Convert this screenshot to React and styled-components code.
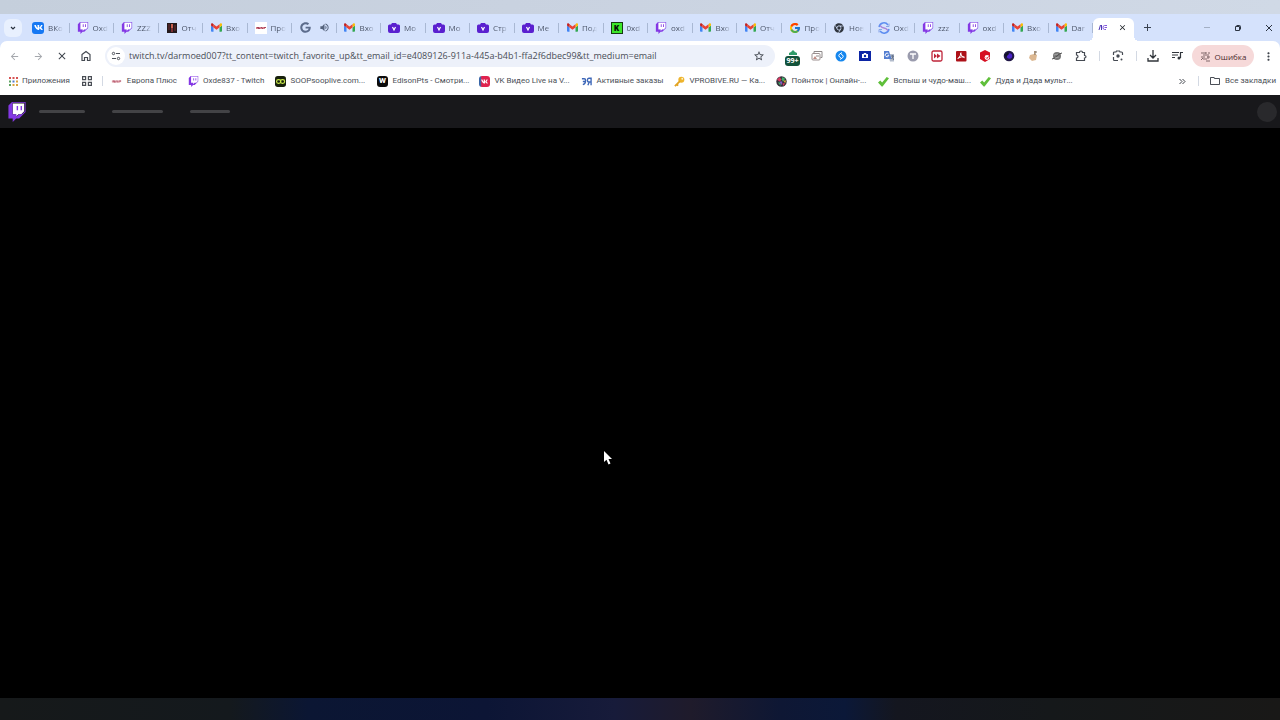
import React from "react";
import styled, { createGlobalStyle } from "styled-components";
import { FaChrome, FaGoogle, FaVk } from "react-icons/fa";
import { FcGoogle } from "react-icons/fc";
import {
  MdArrowBack,
  MdArrowForward,
  MdClose,
  MdMoreVert,
  MdOutlineFolder,
  MdStarBorder,
  MdVolumeUp,
} from "react-icons/md";

const TABS = [
  { icon: "vk", title: "ВКо" },
  { icon: "twitch", title: "Oxd" },
  { icon: "twitch", title: "ZZZ" },
  { icon: "photo", title: "Отч" },
  { icon: "gmail", title: "Вхо" },
  { icon: "europa", title: "Про" },
  { icon: "googleGray", audio: true, title: "" },
  { icon: "gmail", title: "Вхо" },
  { icon: "camera", title: "Мо" },
  { icon: "camera", title: "Мо" },
  { icon: "camera", title: "Стр" },
  { icon: "camera", title: "Ме" },
  { icon: "gmail", title: "Под" },
  { icon: "kick", title: "0xd" },
  { icon: "twitch", title: "oxd" },
  { icon: "gmail", title: "Вхо" },
  { icon: "gmail", title: "Отч" },
  { icon: "google", title: "Про" },
  { icon: "chrome", title: "Нов" },
  { icon: "ring", title: "Oxd" },
  { icon: "twitch", title: "zzz" },
  { icon: "twitch", title: "oxd" },
  { icon: "gmail", title: "Вхо" },
  { icon: "gmail", title: "Dar" },
];

const BOOKMARKS = [
  { icon: "europa", title: "Европа Плюс" },
  { icon: "twitch", title: "Oxde837 - Twitch" },
  { icon: "soop", title: "SOOPsooplive.com...", wide: true },
  { icon: "edison", title: "EdisonPts - Смотри...", wide: true },
  { icon: "vkVideo", title: "VK Видео Live на V...", wide: true },
  { icon: "orders", title: "Активные заказы" },
  { icon: "key", title: "VPROBIVE.RU — Ка...", wide: true },
  { icon: "pointauc", title: "Пойнток | Онлайн-...", wide: true },
  { icon: "check", title: "Вспыш и чудо-маш...", wide: true },
  { icon: "check", title: "Дуда и Дада мульт...", wide: true },
];

const EXTENSIONS = [
  "cards",
  "shazam",
  "capture",
  "translate",
  "letterT",
  "forward",
  "acrobat",
  "cube",
  "orb",
  "hand",
  "planet",
];

function Twitch({ size = 12 }) {
  return (
    <svg width={size} height={size} viewBox="0 0 2400 2800">
      <path
        fill="#fff"
        d="M2200 1300l-400 400h-400l-350 350v-350H600V200h1600z"
      />
      <path
        fill="#8438e4"
        d="M500 0L0 500v1800h600v500l500-500h400l900-900V0H500zm1780 1330l-400 400h-400l-350 350v-350H580V120h1700v1210z"
      />
      <path fill="#8438e4" d="M1700 550h200v600h-200zM1150 550h200v600h-200z" />
    </svg>
  );
}

function Gmail() {
  return (
    <svg width="11" height="9" viewBox="52 42 88 66">
      <path fill="#4285f4" d="M58 108h14V74L52 59v43c0 3.32 2.69 6 6 6" />
      <path fill="#34a853" d="M120 108h14c3.32 0 6-2.69 6-6V59l-20 15" />
      <path fill="#fbbc04" d="M120 48v26l20-15v-8c0-7.42-8.47-11.65-14.4-7.2" />
      <path fill="#ea4335" d="M72 74V48l24 18 24-18v26L96 92" />
      <path
        fill="#c5221f"
        d="M52 51v8l20 15V48l-5.6-4.2c-5.94-4.45-14.4-.22-14.4 7.2"
      />
    </svg>
  );
}

function Svg({ size = 12, children }) {
  return (
    <svg width={size} height={size} viewBox="0 0 12 12" fill="none">
      {children}
    </svg>
  );
}

const icons = {
  twitch: <Twitch />,
  gmail: <Gmail />,
  google: <FcGoogle size={12} />,
  googleGray: <FaGoogle size={11} color="#5c6c8c" />,
  chrome: <FaChrome size={10} color="#30363f" />,
  photo: (
    <Svg>
      <path fill="#241a1c" d="M1 1h10v10H1z" />
      <path fill="#4a2226" d="M2 2h2v6H2zM8 3h2v6H8z" />
      <path fill="#c9604f" d="M5 2h2v4H5z" />
      <path fill="#7d3034" d="M5 6h2v4H5z" />
    </Svg>
  ),
  europa: (
    <Svg>
      <path fill="#fff" d="M0 0h12v12H0z" />
      <path stroke="#d4808c" d="M1 5.500h10M1 6.500h9" />
      <path stroke="#a8445c" d="M2 5.500h2M6 5.500h1M9 5.500h2M3 6.500h2M7 6.500h1" />
    </Svg>
  ),
  camera: (
    <Svg>
      <path
        fill="#5a20cf"
        d="M4 1h4l1 1.500h1.500Q12 2.500 12 4v5q0 2-2 2H2q-2 0-2-2V4q0-1.500 1.500-1.500H3z"
      />
      <path stroke="#fff" strokeWidth="1.200" d="M4.500 5l1.500 3 1.500-3" />
    </Svg>
  ),
  ring: (
    <Svg>
      <path
        stroke="#5d8df0"
        strokeWidth="1.500"
        d="M1 5a5 5 0 0 1 9-2M11 7a5 5 0 0 1-9 2"
      />
      <path stroke="#a884d8" strokeWidth="1.300" d="M2 3.500Q4 6 6 6t4 2.500" />
      <path stroke="#88a5e8" d="M11 1.500v3H8M1 10.500v-3h3" />
    </Svg>
  ),
  orders: (
    <Svg>
      <path
        stroke="#3d67b8"
        strokeWidth="1.500"
        d="M1 3h2.500q1.500 0 1.500 1.500T3.500 6H2M5 4.500q0 4-3 5M11 10V2.500H8.500Q7 2.500 7 4.500t1.500 2H11M9 6.500L7.500 10"
      />
    </Svg>
  ),
  soop: (
    <Svg>
      <rect width="12" height="12" rx="3" fill="#17200c" />
      <rect x="1.700" y="4" width="4.500" height="4" rx="2" stroke="#c8e84a" strokeWidth="1.300" />
      <rect x="6" y="4" width="4.500" height="4" rx="2" stroke="#c8e84a" strokeWidth="1.300" />
    </Svg>
  ),
  key: (
    <Svg>
      <circle cx="8" cy="4" r="3.300" fill="#eeb42c" />
      <circle cx="9" cy="3" r="1" fill="#fff3c8" />
      <path stroke="#e2a321" strokeWidth="2" d="M6.500 5.500L1 11M3 9l1.500 1.500" />
    </Svg>
  ),
  pointauc: (
    <Svg>
      <circle cx="6" cy="6" r="5.700" fill="#35313b" />
      <path fill="#d83a62" d="M1 4l3-3 2 3-2 2zM7 8l3 0-2 3z" />
      <path fill="#3eaf68" d="M7 1l3 2-2 3-2-2zM2 7l3 0 0 4z" />
      <path fill="#e0b438" d="M8 5l3 0-1 3z" />
      <path fill="#8d5ac7" d="M4 6l3 0-1 4z" />
    </Svg>
  ),
  check: (
    <Svg>
      <path fill="#5fbf3a" d="M0 7l2.500-2 2 2L9.500 1 12 2.500 5 11.500H4z" />
    </Svg>
  ),
  cards: (
    <Svg>
      <path stroke="#8d8888" d="M3 3V1.500h8v6H9.500" />
      <rect x="1" y="3.500" width="8" height="6.500" rx="1" stroke="#9b9090" />
      <path fill="#c08c85" d="M2 9l2-3 2 3z" />
      <path stroke="#928a8a" d="M5 6h3" />
    </Svg>
  ),
  shazam: (
    <Svg>
      <circle cx="6" cy="6" r="5.500" fill="#1687ee" />
      <path
        stroke="#fff"
        d="M7 2.500L4.500 4.200Q3 5.500 4.500 7L6 8M5 9.500l2.500-1.700Q9 6.500 7.500 5L6 4"
      />
    </Svg>
  ),
  capture: (
    <Svg>
      <path fill="#0c25a5" d="M0 1h12v10H0z" />
      <path fill="#fff" d="M3 4h1.500l.5-1h2l.5 1H9v4H3z" />
      <circle cx="6" cy="6" r="1.200" fill="#0c25a5" />
    </Svg>
  ),
  translate: (
    <Svg>
      <path fill="#b2bbcb" d="M5 4h6v7.500H7z" />
      <path fill="#547ed1" d="M1 1h5l2.500 8H1z" />
      <path stroke="#fff" d="M5.500 4A1.800 1.800 0 1 0 5.700 5.500H4.500" />
      <path stroke="#67748c" d="M8 6h3M9.500 5v1l1 4M10.500 6L8.500 9" />
    </Svg>
  ),
  letterT: (
    <Svg>
      <circle cx="6" cy="6" r="5.500" fill="#9a9bad" />
      <path stroke="#fff" strokeWidth="1.300" d="M3 4h6M6 4v5" />
    </Svg>
  ),
  forward: (
    <Svg>
      <rect x="1" y="1" width="10" height="10" rx="1.500" stroke="#bf2439" strokeWidth="1.300" />
      <path fill="#bf2439" d="M3 3.500L6 6 3 8.500zM6 3.500L9.500 6 6 8.500z" />
    </Svg>
  ),
  acrobat: (
    <Svg>
      <rect x="1" y="1" width="10.500" height="10.500" rx="1" fill="#ad1118" />
      <path
        stroke="#fff"
        d="M6 2.500Q6 6 2.700 9M5.500 3Q6 6.500 9.500 7.700M3.500 8Q6 6.300 9.500 7"
      />
    </Svg>
  ),
  cube: (
    <Svg>
      <path fill="#d60f22" d="M6 0l5 2.500v6.500L6 12 1 9V2.500z" />
      <circle cx="8" cy="7.500" r="2.400" fill="#fff" />
      <path stroke="#d60f22" d="M7 7.500l1 1L9.500 6.500" />
    </Svg>
  ),
  orb: (
    <Svg>
      <circle cx="6" cy="6" r="5.300" fill="#211847" />
      <circle cx="6.500" cy="6" r="2.700" fill="#4a22c9" />
      <path fill="#111126" d="M1 5l4-3 1 2-3 3z" />
    </Svg>
  ),
  hand: (
    <Svg>
      <path fill="#dcb892" d="M3 5l4-1V1h1v3l2 1-1 5-4 1-3-3z" />
      <path stroke="#7b6a59" d="M8 1v4M8 2h2" />
    </Svg>
  ),
  planet: (
    <Svg>
      <circle cx="6" cy="6" r="4" fill="#767676" />
      <path stroke="#515151" d="M1 9Q3 9 6 6t5-3" />
      <path stroke="#a4a4a4" d="M3 5l4-1M4 8l4-1" />
    </Svg>
  ),
};

function SiteIcon({ name }) {
  if (name === "vk")
    return (
      <Tile $bg="#1678f3" $size={12}>
        <FaVk size={9} />
      </Tile>
    );
  if (name === "kick")
    return (
      <Tile $bg="#3be629" $fg="#071006" $border="#173a12" $size={12}>
        K
      </Tile>
    );
  if (name === "edison")
    return (
      <Tile $bg="#0b0b0b" $size={11}>
        W
      </Tile>
    );
  if (name === "vkVideo")
    return (
      <Tile $bg="linear-gradient(90deg, #3866a8 12%, #e0234e 25%)" $size={11}>
        <FaVk size={7} />
      </Tile>
    );
  return icons[name];
}

export default function App() {
  return (
    <Page>
      <GlobalStyle />
      <Desktop />
      <Chrome>
        <TabStrip>
          <TabSearch aria-label="Поиск вкладок">
            <svg width="6" height="6" viewBox="0 0 6 6" fill="none">
              <path stroke="#28303d" strokeWidth="1.200" d="M1 2l2 2 2-2" />
            </svg>
          </TabSearch>
          <TabList>
            {TABS.map((tab, i) => (
              <Tab key={i} aria-label={tab.title || "Google"}>
                <IconSlot>
                  <SiteIcon name={tab.icon} />
                </IconSlot>
                {tab.audio ? (
                  <Audio>
                    <MdVolumeUp size={11} />
                  </Audio>
                ) : (
                  <TabTitle>{tab.title}</TabTitle>
                )}
              </Tab>
            ))}
          </TabList>
          <ActiveTab>
            <svg width="10" height="10" viewBox="0 0 10 10" fill="none">
              <path stroke="#4b35b5" d="M1 7l1.500-5M3.500 2v5" />
              <path stroke="#8258da" d="M9 2.500H6.500q-1.500 0-1.500 2t1.500 2H8M6.500 4.500H9" />
            </svg>
            <CloseTab aria-label="Закрыть">
              <MdClose size={9} />
            </CloseTab>
          </ActiveTab>
          <NewTab aria-label="Новая вкладка">
            <svg width="9" height="9" viewBox="0 0 9 9">
              <path stroke="#384150" d="M4.500 1v7M1 4.500h7" />
            </svg>
          </NewTab>
          <WindowControls>
            <ControlButton aria-label="Свернуть">
              <svg width="8" height="8" viewBox="0 0 8 8">
                <path stroke="#a3afc4" d="M1 3.500h6" />
              </svg>
            </ControlButton>
            <ControlButton aria-label="Развернуть">
              <svg width="8" height="8" viewBox="0 0 8 8" fill="none">
                <path stroke="#2c3442" d="M1.500 2.500h4v4h-4zM2.500 1.500h3q1 0 1 1v3" />
              </svg>
            </ControlButton>
            <ControlButton aria-label="Закрыть окно">
              <svg width="8" height="8" viewBox="0 0 8 8">
                <path stroke="#2c3442" d="M1 1l6 6M7 1L1 7" />
              </svg>
            </ControlButton>
          </WindowControls>
        </TabStrip>

        <Toolbar>
          <ToolButton $fg="#a5a8ad" aria-label="Назад">
            <MdArrowBack size={11} />
          </ToolButton>
          <ToolButton $fg="#a5a8ad" aria-label="Вперёд">
            <MdArrowForward size={11} />
          </ToolButton>
          <ToolButton aria-label="Остановить">
            <MdClose size={12} />
          </ToolButton>
          <ToolButton aria-label="Домой">
            <Svg>
              <path
                stroke="#454a52"
                strokeWidth="1.200"
                d="M2 4.500L6 1.500l4 3v6H7.500v-3h-3v3H2z"
              />
            </Svg>
          </ToolButton>
          <Omnibox>
            <SiteInfo aria-label="Сведения о сайте">
              <svg width="10" height="10" viewBox="0 0 10 10" fill="none">
                <path stroke="#4b5059" d="M5 2.500h4M1 7.500h4" />
                <circle cx="2.500" cy="2.500" r="1.200" stroke="#4b5059" />
                <circle cx="7.500" cy="7.500" r="1.200" stroke="#4b5059" />
              </svg>
            </SiteInfo>
            <UrlInput
              aria-label="Адресная строка"
              defaultValue="twitch.tv/darmoed007?tt_content=twitch_favorite_up&tt_email_id=e4089126-911a-445a-b4b1-ffa2f6dbec99&tt_medium=email"
            />
            <ToolButton aria-label="Добавить в закладки">
              <MdStarBorder size={12} />
            </ToolButton>
          </Omnibox>
          <ToolButton aria-label="99+">
            <svg width="14" height="14" viewBox="0 0 14 14">
              <path fill="#2f9b68" d="M3 6V4l2-1 2-2 2 2 2 1v2z" />
            </svg>
            <Count>99+</Count>
          </ToolButton>
          {EXTENSIONS.map((name) => (
            <ToolButton key={name} aria-label={name}>
              {icons[name]}
            </ToolButton>
          ))}
          <ToolButton aria-label="Расширения">
            <Svg>
              <path
                stroke="#454a52"
                strokeWidth="1.200"
                d="M1.500 2.500h3Q4.500 1 6 1t1.500 1.500h2V5.500Q11 5.500 11 6.700T9.500 8v2.500h-8V8Q3 8 3 6.500T1.500 5z"
              />
            </Svg>
          </ToolButton>
          <Divider $gap={6} />
          <ToolButton aria-label="Объектив" $width={36}>
            <Svg>
              <path
                stroke="#454a52"
                strokeWidth="1.200"
                d="M1.500 5V3q0-1 1-1H4l.5-1h3L8 2h1.500q1 0 1 1v2M1.500 7v2.500q0 1 1 1H6"
              />
              <circle cx="6" cy="6" r="1.700" fill="#454a52" />
              <circle cx="9.500" cy="9.500" r="1" fill="#454a52" />
            </Svg>
          </ToolButton>
          <Divider />
          <ToolButton aria-label="Загрузки" $width={32}>
            <Svg>
              <path
                stroke="#30343a"
                strokeWidth="1.300"
                d="M6 0v7.500M3 5l3 3 3-3M1 8v3h10V8"
              />
            </Svg>
          </ToolButton>
          <ToolButton aria-label="Медиа" $width={16}>
            <Svg>
              <path
                stroke="#30343a"
                strokeWidth="1.200"
                d="M1 2.500h7M1 5h6M1 7.500h3M9.500 8V2.500H12"
              />
              <circle cx="8" cy="8" r="1.500" fill="#30343a" />
            </Svg>
          </ToolButton>
          <ErrorPill>
            <svg width="11" height="11" viewBox="0 0 11 11" fill="none">
              <path
                stroke="#80696a"
                d="M1 2h5M8 2h2M3 4h6M1 6h4M7 6h3M3 8h4M6 10h4M1 9l2-2M6 1v2M8 5v3"
              />
            </svg>
            Ошибка
          </ErrorPill>
          <ToolButton aria-label="Меню">
            <MdMoreVert size={13} />
          </ToolButton>
        </Toolbar>
      </Chrome>

      <BookmarkBar>
        <Bookmark href="#apps">
          <svg width="9" height="9" viewBox="0 0 9 9">
            <path fill="#d65252" d="M0 0h2v2H0zM3.500 0h2v2h-2zM7 0h2v2H7z" />
            <path fill="#5fa562" d="M0 3.500h2v2H0z" />
            <path fill="#4e7bd0" d="M3.500 3.500h2v2h-2z" />
            <path fill="#d9a23c" d="M7 3.500h2v2H7zM3.500 7h2v2h-2zM7 7h2v2H7z" />
            <path fill="#5fa562" d="M0 7h2v2H0z" />
          </svg>
          Приложения
        </Bookmark>
        <GroupButton aria-label="Группы вкладок">
          <svg width="10" height="10" viewBox="0 0 10 10" fill="none">
            <path
              stroke="#4a4e55"
              strokeWidth="1.200"
              d="M.6.600h3v3h-3zM6.400.600h3v3h-3zM.6 6.400h3v3h-3zM6.400 6.400h3v3h-3z"
            />
          </svg>
        </GroupButton>
        <Divider />
        <BookmarkList>
          {BOOKMARKS.map((b) => (
            <Bookmark key={b.title} href={"#" + b.icon}>
              <BookmarkIcon>
                <SiteIcon name={b.icon} />
              </BookmarkIcon>
              <BookmarkTitle $wide={b.wide}>{b.title}</BookmarkTitle>
            </Bookmark>
          ))}
        </BookmarkList>
        <MoreButton aria-label="Ещё закладки">
          <svg width="7" height="7" viewBox="0 0 7 7" fill="none">
            <path stroke="#3d4148" d="M.5 1L3 3.500.5 6M3.500 1L6 3.500 3.500 6" />
          </svg>
        </MoreButton>
        <Divider />
        <AllBookmarks href="#all">
          <MdOutlineFolder size={12} />
          Все закладки
        </AllBookmarks>
      </BookmarkBar>

      <SiteNav>
        <Twitch size={20} />
        <Skeleton $width={46} />
        <Skeleton $width={51} />
        <Skeleton $width={40} />
        <Avatar />
      </SiteNav>
      <Content />
      <Taskbar />
      <Pointer width="9" height="14" viewBox="0 0 9 14">
        <path fill="#fff" d="M0 0v11l2.500-2.300 2 4.800 2-1-2-4.500H8z" />
      </Pointer>
    </Page>
  );
}

const GlobalStyle = createGlobalStyle`
  * {
    box-sizing: border-box;
  }

  body {
    margin: 0;
    background: #000;
    font-family: "Open Sans", "Noto Sans", sans-serif;
  }

  button {
    border: 0;
    padding: 0;
    background: none;
    font: inherit;
    color: inherit;
  }

  svg {
    display: block;
    flex: none;
  }
`;

const Page = styled.div`
  position: relative;
  display: flex;
  flex-direction: column;
  min-height: 100vh;
  overflow: hidden;
`;

const Desktop = styled.div`
  height: 14px;
  background: linear-gradient(90deg, #c5cfdc, #c9d2e0 40%, #d0d9e6);
`;

const Chrome = styled.div`
  background: #d5e2fc;
`;

const TabStrip = styled.div`
  display: flex;
  align-items: center;
  height: 27px;
`;

const TabSearch = styled.button`
  display: flex;
  align-items: center;
  justify-content: center;
  width: 18px;
  height: 18px;
  margin: 0 3px 0 4px;
  border-radius: 6px;
  background: #e8f0fe;
`;

const TabList = styled.div`
  display: flex;
  flex: 1;
  min-width: 0;
`;

const Tab = styled.button`
  position: relative;
  display: flex;
  flex: 1 1 0;
  align-items: center;
  gap: 4px;
  min-width: 0;
  height: 18px;
  padding-left: 7px;
  overflow: hidden;

  &:after {
    content: "";
    position: absolute;
    right: 0;
    width: 1px;
    height: 10px;
    background: #a9b8d3;
  }
`;

const IconSlot = styled.span`
  display: flex;
  justify-content: center;
  width: 12px;
  flex: none;
`;

const TabTitle = styled.span`
  width: 15px;
  overflow: hidden;
  white-space: nowrap;
  text-align: left;
  font-size: 8px;
  line-height: 12px;
  color: #4c566a;
  mask-image: linear-gradient(90deg, #000 50%, transparent);
`;

const Audio = styled.span`
  padding-left: 4px;
  color: #55637c;
`;

const ActiveTab = styled.div`
  position: relative;
  display: flex;
  align-items: center;
  align-self: flex-end;
  gap: 10px;
  width: 41px;
  height: 23px;
  padding: 0 0 4px 5px;
  border-radius: 6px 6px 0 0;
  background: #fff;

  &:before,
  &:after {
    content: "";
    position: absolute;
    bottom: 0;
    width: 5px;
    height: 5px;
  }

  &:before {
    right: 100%;
    background: radial-gradient(circle at 0 0, transparent 5px, #fff 5px);
  }

  &:after {
    left: 100%;
    background: radial-gradient(circle at 100% 0, transparent 5px, #fff 5px);
  }
`;

const CloseTab = styled.button`
  color: #20242b;
`;

const NewTab = styled.button`
  display: flex;
  justify-content: center;
  width: 26px;
`;

const WindowControls = styled.div`
  display: flex;
  justify-content: flex-end;
  width: 120px;
  gap: 9px;
`;

const ControlButton = styled.button`
  display: flex;
  align-items: center;
  justify-content: center;
  width: 22px;
  height: 22px;
`;

const Tile = styled.span`
  display: flex;
  align-items: center;
  justify-content: center;
  width: ${(props) => props.$size}px;
  height: ${(props) => props.$size}px;
  border: ${(props) => (props.$border ? `1px solid ${props.$border}` : "0")};
  border-radius: ${(props) => (props.$border ? "0" : "3px")};
  background: ${(props) => props.$bg};
  color: ${(props) => props.$fg || "#fff"};
  font-size: 8px;
  font-weight: 800;
  line-height: 10px;
`;

const Toolbar = styled.div`
  display: flex;
  align-items: center;
  height: 30px;
  padding: 0 0 0 2px;
  border-radius: 7px 7px 0 0;
  background: #fff;
`;

const ToolButton = styled.button`
  position: relative;
  display: flex;
  flex: none;
  align-items: center;
  justify-content: center;
  width: ${(props) => props.$width || 24}px;
  height: 22px;
  color: ${(props) => props.$fg || "#3f444c"};
`;

const Omnibox = styled.div`
  display: flex;
  flex: 1;
  align-items: center;
  min-width: 0;
  height: 22px;
  margin: 0 6px 0 7px;
  padding: 0 4px 0 2px;
  border-radius: 11px;
  background: #edf1fa;
`;

const SiteInfo = styled.button`
  display: flex;
  align-items: center;
  justify-content: center;
  width: 18px;
  height: 18px;
  border-radius: 50%;
  background: #fff;
`;

const UrlInput = styled.input`
  flex: 1;
  min-width: 0;
  padding: 0 0 0 4px;
  border: 0;
  outline: 0;
  background: none;
  font-family: inherit;
  font-size: 9px;
  line-height: 14px;
  color: #4a4e57;
`;

const Count = styled.span`
  position: absolute;
  top: 11px;
  left: 4px;
  width: 15px;
  border-radius: 3px;
  background: #12523a;
  color: #fff;
  font-size: 7px;
  font-weight: 700;
  line-height: 10px;
  text-align: center;
`;

const Divider = styled.span`
  flex: none;
  width: 1px;
  height: 10px;
  margin-left: ${(props) => props.$gap || 0}px;
  background: #d3d9e3;
`;

const ErrorPill = styled.button`
  display: flex;
  flex: none;
  align-items: center;
  justify-content: center;
  gap: 4px;
  height: 22px;
  width: 62px;
  margin: 0 2px 0 7px;
  border-radius: 11px;
  background: #f6d9d9;
  color: #4b2b2e;
  font-size: 8px;
`;

const BookmarkBar = styled.div`
  display: flex;
  align-items: center;
  height: 24px;
  padding: 0 4px 4px 9px;
  background: #fff;
  font-family: Roboto, "Open Sans", sans-serif;
`;

const Bookmark = styled.a`
  display: flex;
  flex: none;
  align-items: center;
  gap: 4px;
  color: #4b4f57;
  font-size: 8px;
  line-height: 12px;
  text-decoration: none;
  white-space: nowrap;
`;

const AllBookmarks = styled(Bookmark)`
  margin-left: 10px;
`;

const BookmarkIcon = styled.span`
  display: flex;
  justify-content: center;
  width: 12px;

  > svg {
    width: 11px;
    height: 11px;
  }
`;

const BookmarkTitle = styled.span`
  width: ${(props) => (props.$wide ? "76px" : "auto")};
`;

const BookmarkList = styled.div`
  display: flex;
  flex: 1;
  gap: 10px;
  min-width: 0;
  padding-left: 8px;
  overflow: hidden;
`;

const GroupButton = styled.button`
  padding: 0 10px 0 12px;
`;

const MoreButton = styled.button`
  padding: 0 12px 0 8px;
`;

const SiteNav = styled.nav`
  display: flex;
  align-items: center;
  gap: 27px;
  height: 33px;
  padding: 0 3px 0 7px;
  background: #18181b;

  > svg {
    margin-right: -15px;
  }
`;

const Skeleton = styled.span`
  width: ${(props) => props.$width}px;
  height: 3px;
  border-radius: 2px;
  background: #434346;
`;

const Avatar = styled.span`
  width: 20px;
  height: 20px;
  margin-left: auto;
  border-radius: 50%;
  background: #29292c;
`;

const Content = styled.main`
  flex: 1;
  background: #000;
`;

const Taskbar = styled.footer`
  height: 22px;
  background: linear-gradient(
    90deg,
    #16191a,
    #14191d 18%,
    #0b1633 24%,
    #0c1535 38%,
    #171b3a 48%,
    #1f1b2b 54%,
    #0e1734 61%,
    #0b1838 66%,
    #14161f 70%,
    #15181a 82%,
    #191817
  );
`;

const Pointer = styled.svg`
  position: absolute;
  top: 451px;
  left: 604px;
`;
